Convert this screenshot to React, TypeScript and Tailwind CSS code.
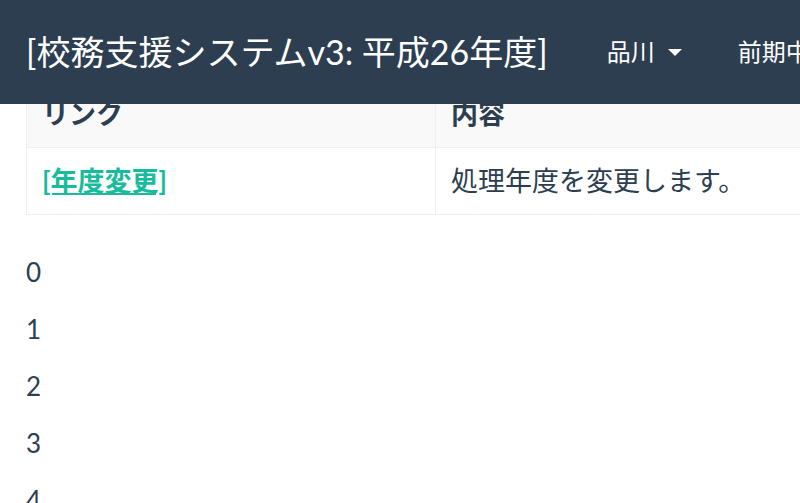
const rows = [0, 1, 2, 3, 4];

const App = () => {
  return (
    <div className="relative h-[503px] overflow-hidden bg-white text-[#2c3e50] font-['Lato','Noto_Sans_CJK_JP',sans-serif]">
      {/* fixed navbar overlaps the scrolled table */}
      <nav className="absolute top-0 left-0 right-0 z-10 h-[104px] bg-[#2c3e50] flex items-center whitespace-nowrap">
        <span className="ml-[26px] text-[34px] text-white leading-none">[校務支援システムv3: 平成26年度]</span>
        <span className="ml-[59px] text-[24px] text-white flex items-center">
          品川
          <span className="ml-[13px] inline-block w-0 h-0 border-l-[7px] border-r-[7px] border-t-[7px] border-l-transparent border-r-transparent border-t-white" />
        </span>
        <span className="ml-[56px] text-[24px] text-white">前期中間</span>
      </nav>

      <div className="pl-[26px] pt-[80px]">
        <table className="w-[800px] border-collapse text-[27px] leading-[28px]">
          <thead>
            <tr className="bg-[#f9f9f9]">
              <th className="w-[409px] border border-[#ecf0f1] px-[15px] py-[19px] text-left font-bold">リンク</th>
              <th className="border border-[#ecf0f1] px-[15px] py-[19px] text-left font-bold">内容</th>
            </tr>
          </thead>
          <tbody>
            <tr>
              <td className="border border-[#ecf0f1] px-[15px] py-[19px]">
                <a href="#" className="font-bold text-[#18bc9c] underline">[年度変更]</a>
              </td>
              <td className="border border-[#ecf0f1] px-[15px] py-[19px]">処理年度を変更します。</td>
            </tr>
          </tbody>
        </table>

        <div className="mt-[39px]">
          {rows.map((n) => (
            <p key={n} className="text-[26px] leading-[37px] mb-[20px]">{n}</p>
          ))}
        </div>
      </div>
    </div>
  );
};

export default App;
